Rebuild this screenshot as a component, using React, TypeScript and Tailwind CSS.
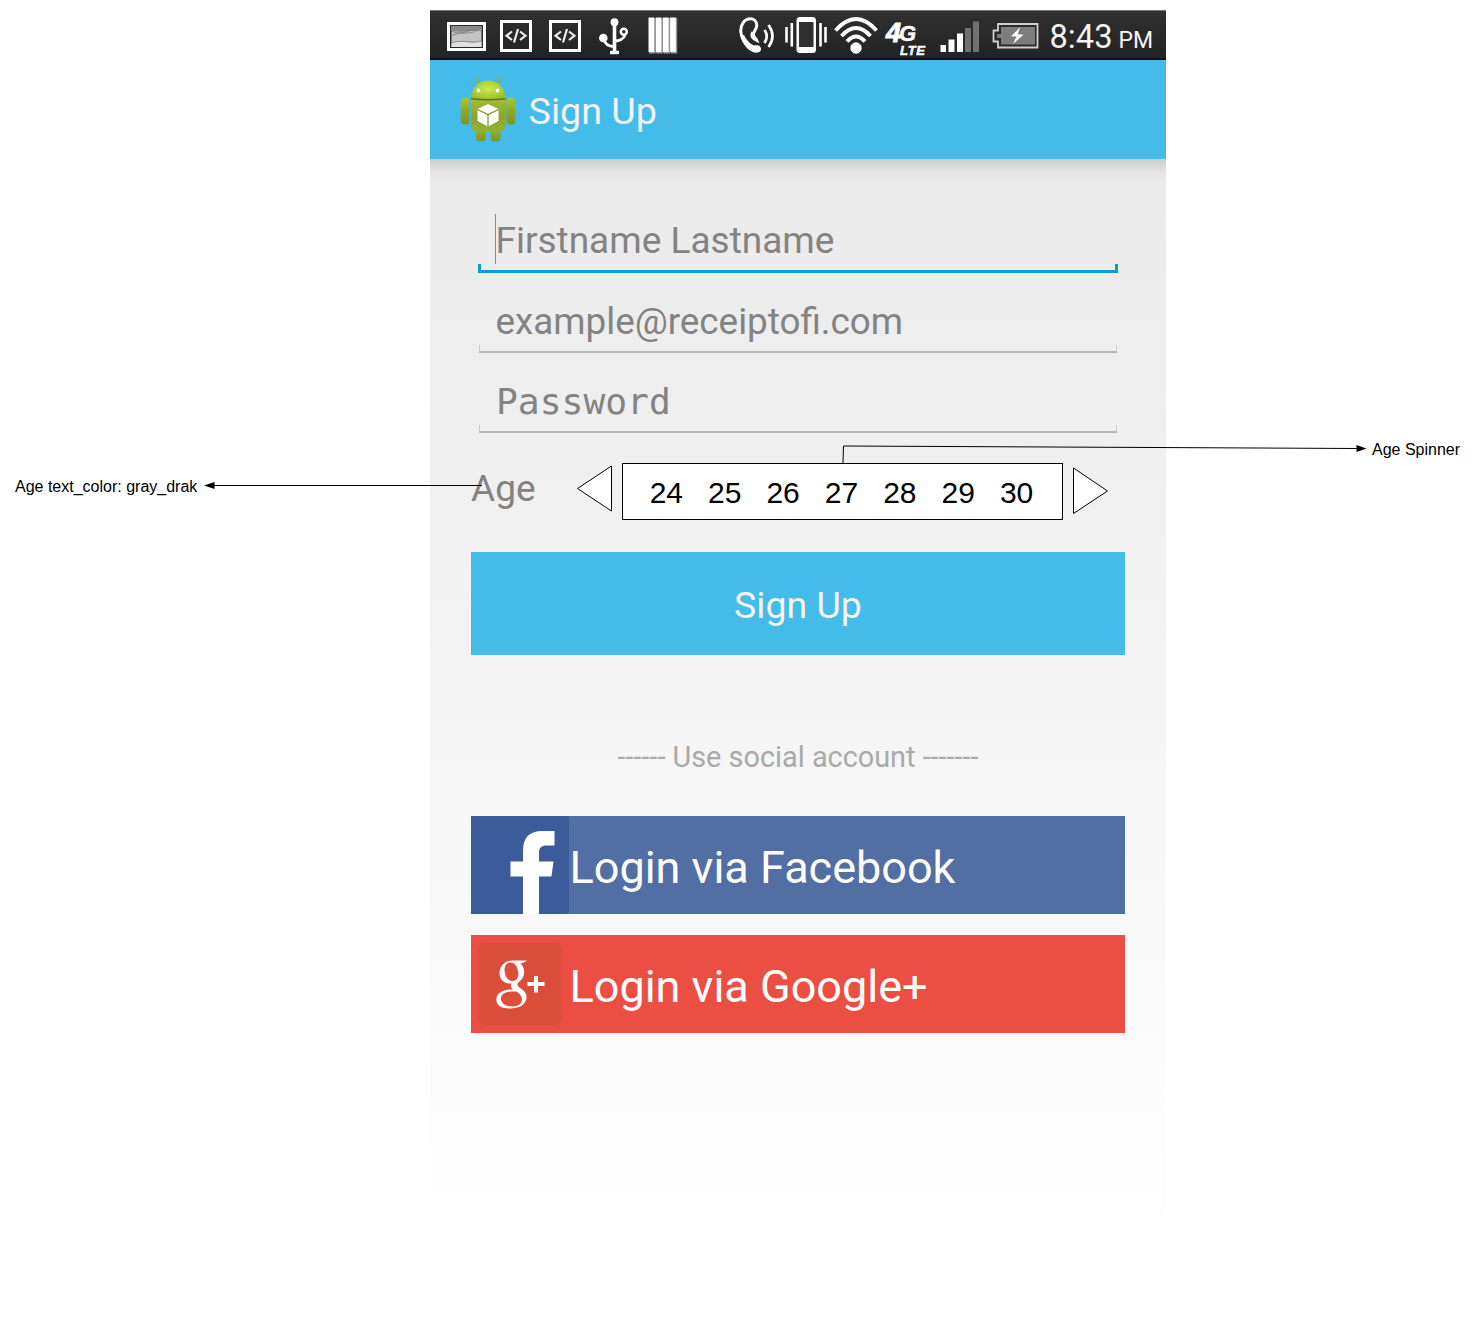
import type { ReactNode } from "react";

function CodeIcon() {
  return (
    <svg width="32" height="32" viewBox="0 0 32 32" fill="none">
      <rect x="1.5" y="1.5" width="29" height="29" stroke="#fff" strokeWidth="3" />
      <path d="M12 11.5 L6.5 15.7 L12 20 M20 11.5 L25.500 15.7 L20 20" stroke="#eee" strokeWidth="2.2" />
      <path d="M18 9 L14 22.5" stroke="#eee" strokeWidth="2.2" />
    </svg>
  );
}

function PictureIcon() {
  return (
    <svg width="39" height="29" viewBox="0 0 39 29">
      <rect x="1.5" y="1.5" width="36" height="26" fill="#2a2a2a" stroke="#fff" strokeWidth="3" />
      <rect x="4.5" y="4" width="30" height="21" fill="#c4c4c4" />
      <path d="M4.5 4 H34.5 V7 C27 8 20 11 4.5 9 Z" fill="#8c8c8c" />
      <path d="M4.5 21 C16 17 24 24 34.5 19 V25 H4.5 Z" fill="#e2e2e2" />
      <path d="M4.5 9 C16 15 22 5 34.5 9 M4.5 14 C15 8 22 15 34.5 6 M4.5 21 C16 17 24 22 34.5 19" fill="none" stroke="#666" strokeWidth=".6" />
    </svg>
  );
}

function UsbIcon() {
  return (
    <svg width="30" height="37" viewBox="0 0 30 37" fill="none" stroke="#fff" strokeWidth="3">
      <path d="M15.500 4 V34" strokeWidth="3.600" />
      <circle cx="15.500" cy="4.200" r="3.900" fill="#fff" stroke="none" />
      <circle cx="4.300" cy="20" r="4.300" fill="#fff" stroke="none" />
      <path d="M5 21 C6 26 10 28.500 15 28.500" strokeWidth="2.800" />
      <circle cx="24.800" cy="13.800" r="3" strokeWidth="2.500" />
      <path d="M26 17 C25 21 20 23 16 23" strokeWidth="2.800" />
      <path d="M11 34.500 H20" strokeWidth="3.400" />
    </svg>
  );
}

function BarsIcon() {
  return (
    <svg width="30" height="37" viewBox="0 0 30 37">
      {[0, 7.2, 14.4, 21.6].map((x) => (
        <g key={x}>
          <rect x={x + 1} y="1" width="6.600" height="35.500" fill="#999" />
          <rect x={x + 0.5} y="0.500" width="5.700" height="34.500" fill="#fff" />
        </g>
      ))}
    </svg>
  );
}

function CallIcon() {
  return (
    <svg width="37" height="36" viewBox="0 0 37 36" fill="none" stroke="#fff">
      <path d="M14 17.500 C15 14 18 12 17.800 8 C17.500 4 14.500 1.700 11.500 1.700 C5 1.700 1.700 8 1.700 14 C2.200 22 7 28.500 14 33" strokeWidth="3" />
      <path d="M2 19 L5 18 C8 24 12 28 16 28.500 C21 27.500 23 31 21.500 34 C18 37.500 11 35 7 30 C4 26.500 2.500 23 2 19 Z" fill="#fff" stroke="none" />
      <path d="M12.500 14.500 L16 16 C15.500 18.500 17 20 18.500 21.500 L20.500 26.500 L15 23.500 C11.500 21.500 10.500 18 12.500 14.500 Z" fill="#fff" stroke="none" />
      <path d="M25.500 13 Q30 19 25.500 26 M29.500 8 Q37.500 19 29.500 30" strokeWidth="2.700" />
    </svg>
  );
}

function VibrateIcon() {
  return (
    <svg width="42" height="36" viewBox="0 0 42 36">
      <rect x="11.500" y="0" width="19.500" height="36" rx="3.500" fill="#fff" />
      <rect x="14" y="5" width="14.500" height="25" fill="#303030" />
      <path d="M1.500 10 V25.500 M6.800 6 V29.500 M35.500 6 V29.500 M40.500 10 V25.500" stroke="#fff" strokeWidth="2.600" />
    </svg>
  );
}

function WifiIcon() {
  return (
    <svg width="44" height="37" viewBox="0 0 44 37" fill="none" stroke="#fff" strokeWidth="4">
      <path d="M1.500 13.500 Q22 -9.500 42.500 13.500" />
      <path d="M7.500 19 Q22 3 36.500 19" />
      <path d="M13 24.500 Q22 14.500 31 24.500" />
      <circle cx="22" cy="31" r="5.700" fill="#fff" stroke="none" />
    </svg>
  );
}

function SignalIcon() {
  return (
    <svg width="40" height="32" viewBox="0 0 40 32" fill="#fff">
      <path d="M.5 24H6v7H.5zM8.500 18.500h6V31h-6zM17 12.500h6V31h-6z" />
      <path d="M25 7h6v24h-6zM33 .5h6V31h-6z" fill="#707070" />
    </svg>
  );
}

function BatteryIcon() {
  return (
    <svg width="47" height="26" viewBox="0 0 47 26">
      <path d="M6 1 H45.500 V24.500 H6 V18.500 H1.500 V7.500 H6 Z" fill="#2a2a2a" stroke="#cfcfcf" strokeWidth="1.800" />
      <path d="M9 4 H43 V21.500 H9 V15 H5 V11 H9 Z" fill="#7d7d7d" />
      <path d="M28 4.500 L19 13.200 L24.500 13.600 L21 21 L31.500 11.700 L25.800 11.300 Z" fill="#fff" />
    </svg>
  );
}

function AndroidIcon() {
  return (
    <svg width="56" height="66" viewBox="0 0 56 66">
      <defs>
        <linearGradient id="torso" x1="0" y1="0" x2="0" y2="1">
          <stop offset="0" stopColor="#a3bf34" />
          <stop offset=".6" stopColor="#88a52a" />
          <stop offset="1" stopColor="#94b132" />
        </linearGradient>
        <linearGradient id="limb" x1="0" y1="0" x2="0" y2="1">
          <stop offset="0" stopColor="#a6c43a" />
          <stop offset=".5" stopColor="#8ba92c" />
          <stop offset="1" stopColor="#7c9828" />
        </linearGradient>
        <radialGradient id="skull" cx=".5" cy=".45" r=".6">
          <stop offset="0" stopColor="#c6ed4c" />
          <stop offset="1" stopColor="#9cbf2c" />
        </radialGradient>
      </defs>
      <path d="M16 1.500 L20 7.500 M40 1.500 L36 7.500" stroke="#93b32e" strokeWidth="2.200" strokeLinecap="round" />
      <rect x="16" y="48" width="10" height="16.500" rx="4" fill="url(#limb)" />
      <rect x="30.500" y="48" width="10" height="16.500" rx="4" fill="url(#limb)" />
      <rect x=".7" y="20.500" width="9" height="27" rx="3.500" fill="url(#limb)" />
      <rect x="46.300" y="20.500" width="9" height="27" rx="3.500" fill="url(#limb)" />
      <path d="M11 21 H45.500 V48 Q45.500 54 39 54 H17.500 Q11 54 11 48 Z" fill="url(#torso)" />
      <path d="M11 21 C12 -2.500 44.500 -2.500 45.500 21 Q28 23 11 21 Z" fill="url(#skull)" />
      <path d="M11 21.700 Q28 23.700 45.500 21.700" fill="none" stroke="#5d7718" strokeWidth="1.600" />
      <circle cx="18.500" cy="13.500" r="1.900" fill="#fff" />
      <circle cx="37.500" cy="13.500" r="1.900" fill="#fff" />
      <path d="M28 27 L38.500 32 V44 L28 49.500 L17.500 44 V32 Z" fill="#fff" />
      <path d="M17.500 32.500 L28 37.500 L38.500 32.500 M28 37.500 V49" fill="none" stroke="#7d9629" strokeWidth="1.300" />
    </svg>
  );
}

function FacebookIcon() {
  return (
    <svg width="98" height="98" viewBox="0 0 98 98" className="shrink-0">
      <rect width="98" height="98" rx="3" fill="#3c5b9b" />
      <rect width="49" height="98" fill="#3c5b9b" />
      <path d="M52 98 V60.500 H39.500 V45.500 H52 V35 C52 21 59 15 71 15 H83.500 V29.500 H76 C70 29.500 68 32 68 37 V45.500 H82.500 L80.500 60.500 H68 V98 Z" fill="#fff" />
    </svg>
  );
}

function GooglePlusIcon() {
  return (
    <div className="ml-[8px] flex size-[82px] items-center justify-center rounded-[5px] bg-[#dc4e3c] pt-[2px]">
      <svg width="50" height="50" viewBox="0 0 50 50" fill="#fff">
        <path
          fillRule="evenodd"
          d="M18 .5 H32 L28 3 H25.500 C31 9 30 17 25 21 C21 24 22 25.500 25 28 C30 31 32 34 31.500 38 C30.500 45 24 48.500 15 48.500 C6 48.500 1 45 1.300 39 C1.800 33 8 29.500 18 29.500 C16 27.500 15.500 26 16.500 23.500 C8 24 4.500 18.500 4.500 13 C4.500 6 10 .5 18 .5 Z M15.500 2.500 C11 2.500 9 7 9.700 12 C10.500 18 14 21.500 18 21 C23 20.500 24 15.500 23 11 C22 6 19.500 2.500 15.500 2.500 Z M19 31.500 C10 31.500 6 34 6 38.500 C6 43.500 11 46.500 17 46.500 C23.500 46.500 27 43.500 27 39.500 C27 36 25 34 21.500 31.500 Z"
        />
        <path d="M39 16 h4 v6 H49.500 v4 H43 v6.500 H39 v-6.500 H32.500 v-4 H39 Z" />
      </svg>
    </div>
  );
}

function NetworkBadge() {
  return (
    <div className="flex w-[43px] flex-col font-['Liberation_Sans'] font-bold italic">
      <div className="flex h-[22px] items-end leading-none">
        <span className="-mr-[2px] text-[27px] leading-[23px] [-webkit-text-stroke:1px_white]">4</span>
        <span className="text-[22px] leading-[22px] [-webkit-text-stroke:0.500px_white]">G</span>
      </div>
      <div className="ml-[14px] text-[13px] leading-[12px] tracking-[0.700px] [-webkit-text-stroke:0.500px_white]">LTE</div>
    </div>
  );
}

function StatusBar() {
  return (
    <div className="flex h-[50px] shrink-0 items-start border-t border-[#777] bg-linear-to-b from-[#303030] to-[#222] pl-[17px] text-white shadow-[inset_0_-2px_0_#111]">
      <div className="mt-[11px]"><PictureIcon /></div>
      <div className="mt-[9px] ml-[14px]"><CodeIcon /></div>
      <div className="mt-[9px] ml-[17px]"><CodeIcon /></div>
      <div className="mt-[7px] ml-[18px]"><UsbIcon /></div>
      <div className="mt-[6px] ml-[19px]"><BarsIcon /></div>
      <div className="mt-[6px] ml-[61px]"><CallIcon /></div>
      <div className="mt-[6px] ml-[9px]"><VibrateIcon /></div>
      <div className="mt-[6px] ml-[7px]"><WifiIcon /></div>
      <div className="mt-[12px] ml-[8px]"><NetworkBadge /></div>
      <div className="mt-[10px] ml-[11px]"><SignalIcon /></div>
      <div className="mt-[12px] ml-[12px]"><BatteryIcon /></div>
      <div className="mt-[6px] ml-[10.500px] whitespace-nowrap text-[32.700px] leading-[40px] text-[#f4f4f4]">
        8:43<span className="ml-[6px] text-[23px]">PM</span>
      </div>
    </div>
  );
}

function Field({ active, mono, children }: { active?: boolean; mono?: boolean; children: ReactNode }) {
  return (
    <div className="relative h-[60px] w-full text-[#838383]">
      {active && <div className="absolute top-0 left-[16px] h-[50px] w-px bg-[#8a8a8a]" />}
      <div
        className={
          mono
            ? "pl-[17px] font-['DejaVu_Sans_Mono'] text-[36.300px] leading-[55px]"
            : active
              ? "pl-[16.500px] text-[37px] leading-[54px]"
              : "pl-[16.500px] text-[36.800px] leading-[55px]"
        }
      >
        {children}
      </div>
      <div
        className={
          active
            ? "absolute inset-x-[-1px] bottom-px h-[9px] border-x-[3px] border-b-[3px] border-[#0c9cce]"
            : "absolute inset-x-0 bottom-px h-[8px] border-x-[1.500px] border-b-[2px] border-x-[#c6c6c6] border-b-[#b8b8b8]"
        }
      />
    </div>
  );
}

function SocialButton({ icon, label, className }: { icon: ReactNode; label: string; className: string }) {
  return (
    <button className={`flex h-[98px] w-full items-center text-left text-[45px] text-white ${className}`}>
      <span className="flex w-[98px] shrink-0">{icon}</span>
      <span className="pt-[5px] pl-[0.500px]">{label}</span>
    </button>
  );
}

function AgeRow() {
  return (
    <div className="flex h-[57px] items-start">
      <div className="w-[105px] text-[37px] leading-[52px] text-[#838383]">Age</div>
      <svg className="mt-[2px] shrink-0" width="37" height="48" viewBox="0 0 37 48">
        <path d="M35.500 1 L1.500 23.500 L35.500 46 Z" fill="#fff" stroke="#000" />
      </svg>
      <div className="ml-[9px] flex h-[57px] w-[441px] shrink-0 items-center justify-center border border-black bg-white pt-px pr-[2px] font-['Liberation_Sans'] text-[30px] whitespace-pre text-black">
        {"24   25   26   27   28   29   30"}
      </div>
      <svg className="mt-[4px] ml-[9px] shrink-0" width="37" height="48" viewBox="0 0 37 48">
        <path d="M1.500 1 L35.500 24 L1.500 46.500 Z" fill="#fff" stroke="#000" />
      </svg>
    </div>
  );
}

function Annotations() {
  return (
    <div className="absolute inset-0 font-['Liberation_Sans'] text-[16px] leading-[18px] text-black">
      <svg className="absolute inset-0" width="1475" height="1328">
        <path d="M214 485.500 H482" stroke="#000" />
        <path d="M204 485.500 L214.500 482 V489 Z" />
        <path d="M843 463 L843.500 446 L1357 448.500" fill="none" stroke="#000" />
        <path d="M1366.500 448.500 L1356.500 445 V452 Z" />
      </svg>
      <span className="absolute top-[478px] left-[15px] whitespace-nowrap">Age text_color: gray_drak</span>
      <span className="absolute top-[441px] left-[1372px] whitespace-nowrap">Age Spinner</span>
    </div>
  );
}

export default function App() {
  return (
    <div className="relative flex h-[1328px] w-[1475px] overflow-hidden bg-white pt-[10px] pl-[430px] font-['Roboto',sans-serif]">
      <main className="flex h-[1256px] w-[736px] flex-col">
        <StatusBar />
        <header className="flex h-[99px] shrink-0 items-center bg-[#44bbe8] pl-[30px] text-[37.700px] text-[#f2f2f2]">
          <AndroidIcon />
          <h1 className="ml-[12.500px] pt-[4px]">Sign Up</h1>
        </header>
        <div className="flex grow flex-col bg-linear-to-b from-[#eaeaea] to-white px-[41px]">
          <div className="-mx-[41px] h-[24px] shrink-0 bg-linear-to-b from-black/13 via-black/3 to-transparent" />
          <div className="mt-[31px] flex flex-col gap-[20px] px-[8px]">
            <Field active>Firstname Lastname</Field>
            <Field>example@receiptofi.com</Field>
            <Field mono>Password</Field>
          </div>
          <div className="mt-[29px]"><AgeRow /></div>
          <button className="mt-[32px] h-[103px] w-full shrink-0 bg-[#44bbe8] pt-[3px] text-[37.500px] text-[#f4f4f4]">Sign Up</button>
          <div className="mt-[80px] text-center text-[28.850px] leading-[44px] whitespace-nowrap text-[#aaa]">
            ------ Use social account -------
          </div>
          <div className="mt-[37px] flex flex-col gap-[21px]">
            <SocialButton icon={<FacebookIcon />} label="Login via Facebook" className="bg-[#516fa3]" />
            <SocialButton icon={<GooglePlusIcon />} label="Login via Google+" className="bg-[#eb4f44]" />
          </div>
        </div>
      </main>
      <Annotations />
    </div>
  );
}
